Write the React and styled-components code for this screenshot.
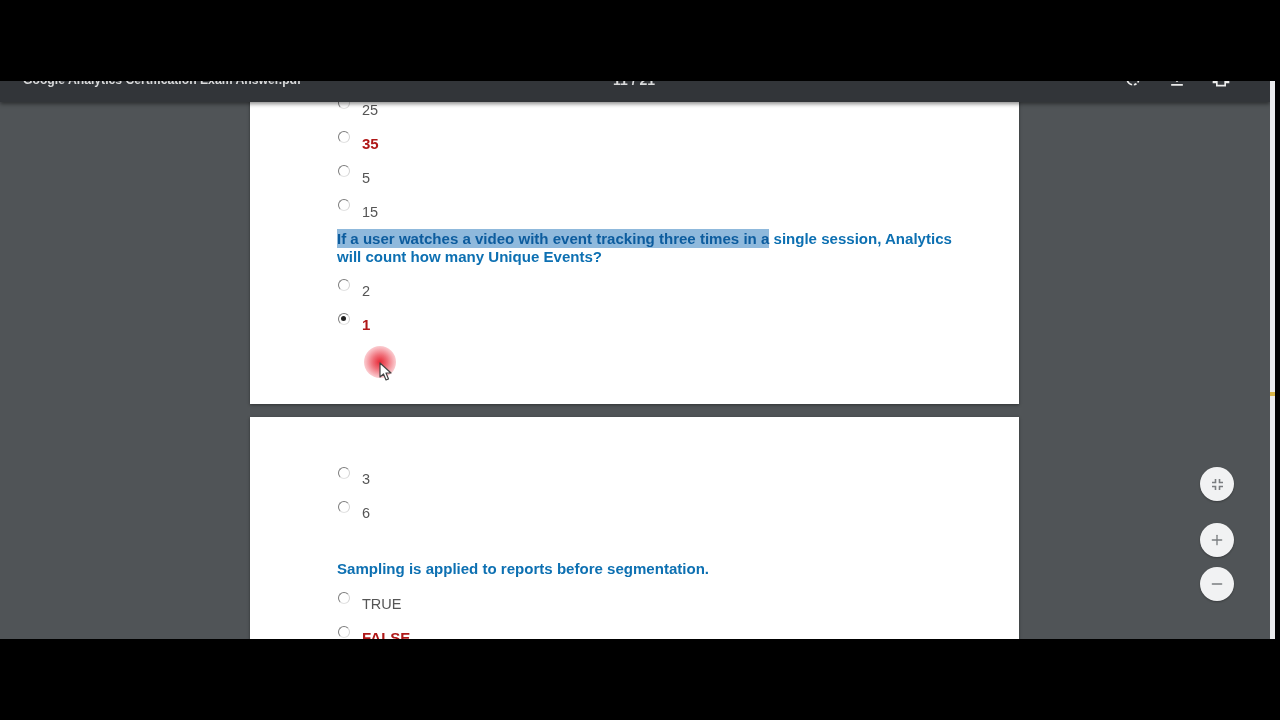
import React from "react";
import styled, { createGlobalStyle } from "styled-components";
import { Plus, Minus } from "lucide-react";
import { MdRotateRight, MdFileDownload, MdPrint } from "react-icons/md";

const Global = createGlobalStyle`
  html, body { margin: 0; padding: 0; background: #000; }
  body { font-family: "Liberation Sans", Arial, sans-serif; }
`;

const Frame = styled.div`
  width: 1280px;
  height: 720px;
  padding: 81px 5px 81px 0;
  box-sizing: border-box;
  background: #000;
  display: flex;
  overflow: hidden;
`;

const Viewer = styled.div`
  position: relative;
  flex: 1;
  display: flex;
  flex-direction: column;
  background: #505457;
  overflow: hidden;
  filter: blur(0.45px);
`;

const Toolbar = styled.div`
  position: relative;
  z-index: 2;
  flex: none;
  height: 21px;
  box-sizing: border-box;
  padding: 0 39px 14px 23px;
  display: grid;
  grid-template-columns: 1fr auto 1fr;
  grid-template-rows: 7px;
  align-items: end;
  background: #323539;
  box-shadow: 0 2px 4px rgba(0, 0, 0, 0.45);
  overflow: hidden;
`;

const Title = styled.div`
  font-size: 12.2px;
  font-weight: 700;
  line-height: 15px;
  white-space: nowrap;
  color: #d8d9da;
`;

const PageCount = styled.div`
  margin-left: 14px;
  font-size: 14px;
  font-weight: 700;
  line-height: 15px;
  color: #d8d9da;
`;

const Actions = styled.div`
  display: flex;
  justify-content: flex-end;
  align-items: flex-end;
  gap: 24px;
  margin-bottom: -1px;
  color: #ececec;
  svg { display: block; }
`;

const Scroller = styled.div`
  flex: 1;
  overflow: hidden;
`;

const PageStack = styled.div`
  margin-top: -20px;
  display: flex;
  flex-direction: column;
  gap: 13px;
`;

const Page = styled.div`
  position: relative;
  flex: none;
  width: 769px;
  height: ${(p) => p.$height}px;
  margin-left: 250px;
  padding: ${(p) => p.$top}px 50px 0 87px;
  box-sizing: border-box;
  background: #fff;
  box-shadow: 0 1px 3px rgba(0, 0, 0, 0.4);
`;

const OptionList = styled.div`
  display: flex;
  flex-direction: column;
  gap: 12px;
`;

const Option = styled.div`
  display: flex;
  align-items: flex-start;
  gap: 12px;
  height: 22px;
`;

const Radio = styled.span`
  position: relative;
  flex: none;
  width: 12px;
  height: 12px;
  margin-left: 1px;
  box-sizing: border-box;
  border-radius: 50%;
  border: 1.5px solid #7c7c7c;
  border-right-color: #d2d2d2;
  border-bottom-color: #e2e2e2;
  background: #fff;
  &::after {
    content: "";
    display: ${(p) => (p.$checked ? "block" : "none")};
    position: absolute;
    left: 2px;
    top: 2px;
    width: 5px;
    height: 5px;
    border-radius: 50%;
    background: #222;
  }
`;

const Answer = styled.span`
  margin-top: ${(p) => (p.$tight ? 3 : 4)}px;
  font-size: ${(p) => (p.$correct ? 15 : 14.5)}px;
  line-height: 18px;
  font-weight: ${(p) => (p.$correct ? 700 : 400)};
  color: ${(p) => (p.$correct ? "#b01818" : "#555")};
`;

const Question = styled.div`
  margin-top: ${(p) => p.$before}px;
  margin-bottom: ${(p) => p.$after}px;
  font-size: 15.06px;
  line-height: 18px;
  font-weight: 700;
  color: #0d70b2;
`;

const Highlight = styled.span`
  background: #8fb9dc;
  color: #0c5c9e;
  padding: 1px 0;
`;

const Pointer = styled.div`
  position: absolute;
  left: 114px;
  top: 264px;
  width: 32px;
  height: 32px;
  border-radius: 50%;
  background: radial-gradient(circle, rgba(228, 18, 32, 0.9) 0%, rgba(232, 40, 55, 0.68) 32%, rgba(238, 70, 85, 0.38) 62%, rgba(245, 110, 120, 0.08) 88%, rgba(245, 120, 130, 0) 100%);
  svg { position: absolute; left: 15px; top: 16px; }
`;

const Controls = styled.div`
  position: absolute;
  z-index: 3;
  right: 36px;
  top: 386px;
  display: flex;
  flex-direction: column;
  gap: 22px;
`;

const ZoomGroup = styled.div`
  display: flex;
  flex-direction: column;
  gap: 10px;
`;

const RoundButton = styled.div`
  width: 34px;
  height: 34px;
  border-radius: 50%;
  background: #f1f2f3;
  color: #7a7d80;
  display: flex;
  align-items: center;
  justify-content: center;
  box-shadow: 0 1px 2px rgba(0, 0, 0, 0.3);
`;

const Scrollbar = styled.div`
  position: relative;
  flex: none;
  width: 5px;
  background: #e9eaec;
  &::after {
    content: "";
    position: absolute;
    left: 0;
    top: 311px;
    width: 5px;
    height: 4px;
    background: #d8b648;
  }
`;

function Row({ label, correct, checked, tight }) {
  return (
    <Option>
      <Radio $checked={checked} />
      <Answer $correct={correct} $tight={tight}>{label}</Answer>
    </Option>
  );
}

export default function App() {
  return (
    <>
      <Global />
      <Frame>
        <Viewer>
          <Toolbar>
            <Title>Google Analytics Certification Exam Answer.pdf</Title>
            <PageCount>11 / 21</PageCount>
            <Actions>
              <MdRotateRight size={20} />
              <MdFileDownload size={20} />
              <MdPrint size={20} />
            </Actions>
          </Toolbar>
          <Scroller>
            <PageStack>
              <Page $height={322} $top={15}>
                <OptionList>
                  <Row label="25" />
                  <Row label="35" correct />
                  <Row label="5" />
                  <Row label="15" />
                </OptionList>
                <Question $before={9} $after={13}>
                  <Highlight>If a user watches a video with event tracking three times in a</Highlight> single session, Analytics will count how many Unique Events?
                </Question>
                <OptionList>
                  <Row label="2" tight />
                  <Row label="1" correct checked tight />
                </OptionList>
                <Pointer>
                  <svg width="14" height="20" viewBox="0 0 14 20">
                    <path d="M1 1 L1 15 L4.5 12 L7 18 L9.5 17 L7 11 L12 11 Z" fill="#fff" stroke="#444" strokeWidth="1.2" strokeLinejoin="round" />
                  </svg>
                </Pointer>
              </Page>
              <Page $height={400} $top={50}>
                <OptionList>
                  <Row label="3" tight />
                  <Row label="6" tight />
                </OptionList>
                <Question $before={37} $after={14}>Sampling is applied to reports before segmentation.</Question>
                <OptionList>
                  <Row label="TRUE" tight />
                  <Row label="FALSE" correct tight />
                </OptionList>
              </Page>
            </PageStack>
          </Scroller>
          <Controls>
            <RoundButton>
              <svg width="13" height="13" viewBox="0 0 13 13" fill="none" stroke="currentColor" strokeWidth="1.6">
                <path d="M4.5 1v3.5H1M8.5 1v3.5H12M4.5 12V8.5H1M8.5 12V8.5H12" />
              </svg>
            </RoundButton>
            <ZoomGroup>
              <RoundButton><Plus size={16} strokeWidth={2} /></RoundButton>
              <RoundButton><Minus size={16} strokeWidth={2} /></RoundButton>
            </ZoomGroup>
          </Controls>
        </Viewer>
        <Scrollbar />
      </Frame>
    </>
  );
}
